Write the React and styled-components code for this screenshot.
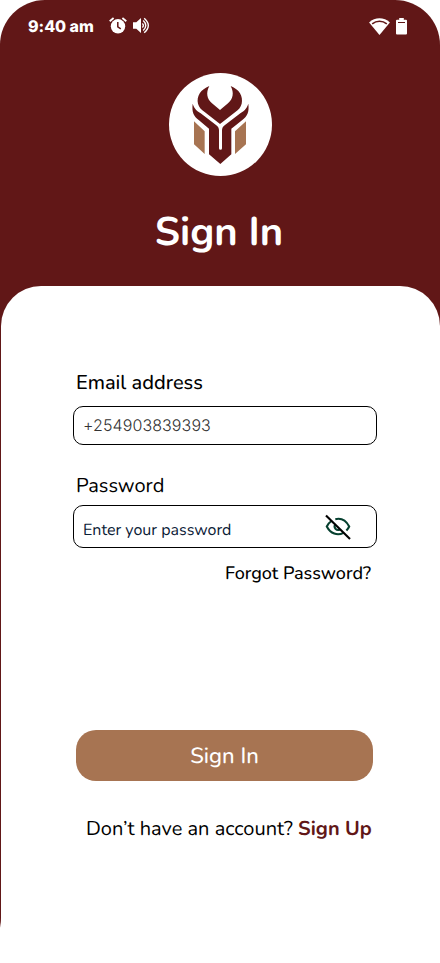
import React from "react";
import styled, { createGlobalStyle } from "styled-components";

const MAROON = "#611717";
const BROWN = "#a77452";

const GlobalStyle = createGlobalStyle`
  *, *::before, *::after { box-sizing: border-box; }
  html, body { margin: 0; background: #fff; }
  body {
    font-family: Nunito, Lato, sans-serif;
    color: #000;
    text-rendering: geometricPrecision;
  }
  button, input { font: inherit; text-rendering: inherit; }
`;

const Screen = styled.main`
  display: flex;
  flex-direction: column;
  width: 440px;
  height: 963px;
  background: ${MAROON};
  border-radius: 45px;
`;

const StatusBar = styled.header`
  display: flex;
  align-items: center;
  height: 51px;
  padding: 0 33px 0 28px;
  color: #fff;
`;

const Time = styled.span`
  width: 81px;
  font: 800 16px/20px Inter, sans-serif;
  letter-spacing: -0.05px;
  white-space: nowrap;
`;

const StatusGroup = styled.div`
  display: flex;
  align-items: center;
  gap: ${(p) => p.$gap}px;
  margin-left: ${(p) => (p.$end ? "auto" : "0")};
  padding-top: ${(p) => (p.$end ? "2px" : "0")};
  svg { display: block; }
`;

const Hero = styled.section`
  display: flex;
  flex-direction: column;
  align-items: center;
  height: 235px;
  padding-top: 22px;
`;

const Logo = styled.svg`
  display: block;
  width: 103px;
  height: 103px;
`;

const Title = styled.h1`
  margin: 33px 0 0;
  padding-right: 2px;
  color: #fff;
  font-size: 40px;
  font-weight: 700;
  line-height: 48px;
`;

const Panel = styled.form`
  display: flex;
  flex-direction: column;
  flex: 1;
  margin-left: 1px;
  padding: 85px 63px 0 72px;
  background: #fff;
  border-radius: 40px 40px 0 0;
`;

const Label = styled.label`
  height: 26px;
  margin: ${(p) => p.$top}px 0 0 3px;
  font-size: 20px;
  font-weight: ${(p) => p.$weight};
  line-height: 26px;
`;

const Field = styled.div`
  display: flex;
  align-items: center;
  height: ${(p) => p.$height}px;
  margin-top: ${(p) => p.$top}px;
  padding: 0 25px 0 9px;
  border: 1px solid #000;
  border-radius: 10px;
`;

const Input = styled.input`
  flex: 1;
  min-width: 0;
  padding: ${(p) => (p.$phone ? "0 0 2px" : "6px 0 0")};
  border: 0;
  outline: 0;
  background: transparent;
  color: #333;
  font-family: ${(p) => (p.$phone ? "Inter, sans-serif" : "inherit")};
  font-size: 16px;
  font-weight: ${(p) => (p.$phone ? 300 : 400)};
  line-height: 20px;
  letter-spacing: ${(p) => (p.$phone ? "0.1px" : "0")};
  &::placeholder { color: #0a2036; opacity: 1; }
`;

const EyeButton = styled.button`
  display: flex;
  padding: 0;
  border: 0;
  background: none;
`;

const Forgot = styled.a`
  align-self: flex-end;
  margin: 14px 6px 0 0;
  font-size: 18px;
  font-weight: 500;
  line-height: 24px;
  white-space: nowrap;
`;

const Submit = styled.button`
  height: 51px;
  margin: 144px 4px 0 3px;
  padding: 1px 7px 0;
  border: 0;
  border-radius: 20px;
  background: ${BROWN};
  color: #fff;
  font-size: 22px;
  font-weight: 500;
`;

const Footer = styled.p`
  margin: 36px 0 0 13px;
  font-size: 20px;
  line-height: 26px;
  white-space: nowrap;
`;

const SignUp = styled.a`
  color: ${MAROON};
  font-weight: 700;
`;

const AlarmIcon = () => (
  <svg width="18" height="17" viewBox="0 0 18 17">
    <circle cx="9" cy="9.3" r="7.2" fill="#fff" />
    <path d="M.7 4.3 4.6 1M17.3 4.3 13.4 1" stroke="#fff" strokeWidth="1.8" />
    <path d="M8.8 5v4.8l3 2" fill="none" stroke={MAROON} strokeWidth="1.5" />
  </svg>
);

const SoundIcon = () => (
  <svg width="17" height="17" viewBox="0 0 17 17">
    <path d="M0 5.3h3.3L8 .9v15.2l-4.7-4.4H0z" fill="#fff" />
    <path d="M9.3 6.4q2.2 2.1 0 4.2M10.2 3.6q5.2 4.9 0 9.8M11.2 1.2q8.2 7.3 0 14.6" fill="none" stroke="#fff" strokeWidth="1.4" />
  </svg>
);

const WifiIcon = () => (
  <svg width="21" height="17" viewBox="0 0 21 17">
    <path d="M10.5 17 .1 4.4C6-1.2 15-1.2 20.9 4.4z" fill="#fff" />
    <path d="M3.2 5.8c4.4-3.5 10.2-3.5 14.6 0" fill="none" stroke={MAROON} strokeWidth="1.6" />
  </svg>
);

const BatteryIcon = () => (
  <svg width="11" height="17" viewBox="0 0 11 17">
    <path d="M3.2 0h4.6v1.8H10a1 1 0 0 1 1 1v12.7a1 1 0 0 1-1 1H1a1 1 0 0 1-1-1V2.8a1 1 0 0 1 1-1h2.2z" fill="#fff" />
    <path d="M2 4.5h7" stroke={MAROON} strokeWidth="1" />
  </svg>
);

const BrandLogo = () => (
  <Logo viewBox="27 24 309 309" aria-label="Logo">
    <circle cx="181.5" cy="178.5" r="154.5" fill="#fff" />
    <g fill={MAROON}>
      <path d="M148 63C122 73 109 94 114 116C117 128 124 133 134 141L180 177L226 141C236 133 242 128 245 116C250 94 238 73 212 63C223 84 219 101 204 115L180 135L156 115C141 101 137 84 148 63Z" />
      <path d="M98 116C95 142 101 153 117 166L147 191V268L181 297L214 268V191L246 166C262 153 268 142 265 116C259 134 251 138 241 145L195 180C188 185 186 189 186 197V250A4.5 4.5 0 0 1 177 250V197C177 189 175 185 168 180L122 145C112 138 104 134 98 116Z" />
    </g>
    <path d="M102 169 134 199V267L102 238ZM258 169 225 199V267L258 238Z" fill={BROWN} />
  </Logo>
);

const EyeOffIcon = () => (
  <svg width="26" height="26" viewBox="0 0 26 26">
    <g fill="none" stroke="#06402f" strokeWidth="2.1">
      <path d="M10.3 5.2C16.5 3.7 21.3 7 24.2 12.5C23.5 14 22.5 15.5 21.4 16.6" />
      <path d="M6.4 7C4.4 8.4 2.9 10.3 1.8 12.5C5.5 19.6 12.5 22.2 18.4 18.8" />
      <path d="M10.2 10.7C8.2 13.6 11.8 17.5 15 15.3" />
    </g>
    <path d="M1 1.5 25 25" stroke="#000" strokeWidth="2.1" />
  </svg>
);

export default function App() {
  return (
    <>
      <GlobalStyle />
      <Screen>
        <StatusBar>
          <Time>9:40 am</Time>
          <StatusGroup $gap={6}>
            <AlarmIcon />
            <SoundIcon />
          </StatusGroup>
          <StatusGroup $gap={6} $end>
            <WifiIcon />
            <BatteryIcon />
          </StatusGroup>
        </StatusBar>
        <Hero>
          <BrandLogo />
          <Title>Sign In</Title>
        </Hero>
        <Panel onSubmit={(e) => e.preventDefault()}>
          <Label htmlFor="email" $top={0} $weight={500}>Email address</Label>
          <Field $top={9} $height={39}>
            <Input id="email" $phone defaultValue="+254903839393" />
          </Field>
          <Label htmlFor="password" $top={29} $weight={400}>Password</Label>
          <Field $top={5} $height={43}>
            <Input id="password" type="password" placeholder="Enter your password" />
            <EyeButton type="button" aria-label="Show password">
              <EyeOffIcon />
            </EyeButton>
          </Field>
          <Forgot>Forgot Password?</Forgot>
          <Submit type="submit">Sign In</Submit>
          <Footer>
            Don’t have an account? <SignUp>Sign Up</SignUp>
          </Footer>
        </Panel>
      </Screen>
    </>
  );
}
